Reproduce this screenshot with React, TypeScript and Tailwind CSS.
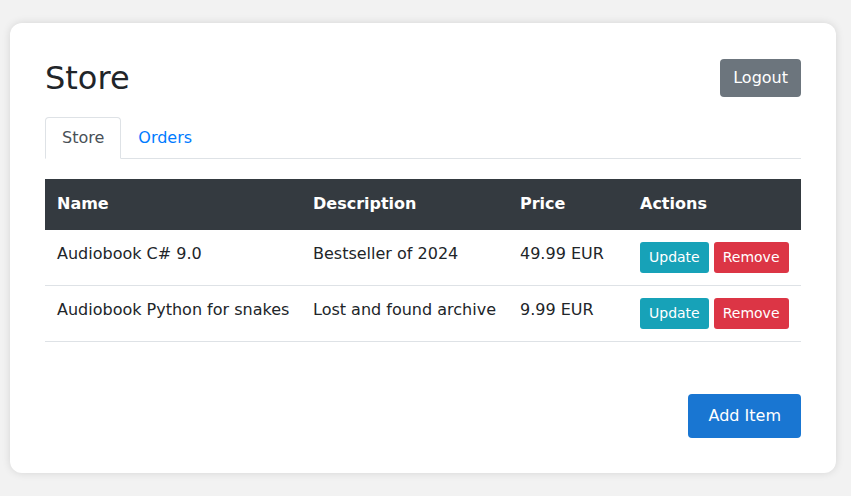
export default function App() {
  const rows = [
    { name: "Audiobook C# 9.0", desc: "Bestseller of 2024", price: "49.99 EUR" },
    { name: "Audiobook Python for snakes", desc: "Lost and found archive", price: "9.99 EUR" },
  ];
  return (
    <div className="min-h-[496px] bg-[#f2f2f2] pt-[23px] pl-[10px] pr-[15px] pb-[23px]" style={{ fontFamily: '"DejaVu Sans", sans-serif' }}>
      <div className="w-[826px] rounded-[12px] bg-white shadow-[0_0_8px_rgba(0,0,0,0.12)] px-[35px] pt-[35px] pb-[35px] text-[#212529]">
        <div className="flex items-start justify-between h-[59px]">
          <h1 className="text-[32px] leading-[38px] mt-[1px] font-normal">Store</h1>
          <button className="mt-[1px] h-[38px] px-[13px] rounded-[4px] bg-[#6c757d] text-white text-[16px] leading-[24px]">Logout</button>
        </div>
        <div className="flex border-b border-[#dee2e6] h-[42px]">
          <div className="h-[42px] px-[16px] flex items-center border border-[#dee2e6] border-b-white rounded-t-[4px] text-[#495057] text-[16px] bg-white -mb-px">Store</div>
          <div className="h-[41px] px-[17px] flex items-center text-[#007bff] text-[16px]">Orders</div>
        </div>
        <table className="mt-[20px] w-[756px] table-fixed border-collapse text-[16px] leading-[24px] whitespace-nowrap">
          <colgroup>
            <col className="w-[256px]" />
            <col className="w-[207px]" />
            <col className="w-[120px]" />
            <col className="w-[173px]" />
          </colgroup>
          <thead>
            <tr className="bg-[#343a40] text-white h-[51px]">
              <th className="text-left font-bold px-[12px] pb-[2px]">Name</th>
              <th className="text-left font-bold px-[12px] pb-[2px]">Description</th>
              <th className="text-left font-bold px-[12px] pb-[2px]">Price</th>
              <th className="text-left font-bold px-[12px] pb-[2px]">Actions</th>
            </tr>
          </thead>
          <tbody>
            {rows.map((r) => (
              <tr key={r.name} className="border-b border-[#dee2e6]">
                <td className="align-top p-[12px] h-[55px]">{r.name}</td>
                <td className="align-top p-[12px]">{r.desc}</td>
                <td className="align-top p-[12px]">{r.price}</td>
                <td className="align-top p-[12px]">
                  <div className="flex gap-[5px]">
                    <button className="h-[31px] px-[9px] rounded-[3px] bg-[#17a2b8] text-white text-[14px] leading-[21px]">Update</button>
                    <button className="h-[31px] px-[9px] rounded-[3px] bg-[#dc3545] text-white text-[14px] leading-[21px]">Remove</button>
                  </div>
                </td>
              </tr>
            ))}
          </tbody>
        </table>
        <div className="flex justify-end mt-[52px]">
          <button className="h-[44px] pl-[21px] pr-[20px] rounded-[4px] bg-[#1976d2] text-white text-[16px] leading-[24px]">Add Item</button>
        </div>
      </div>
    </div>
  );
}
